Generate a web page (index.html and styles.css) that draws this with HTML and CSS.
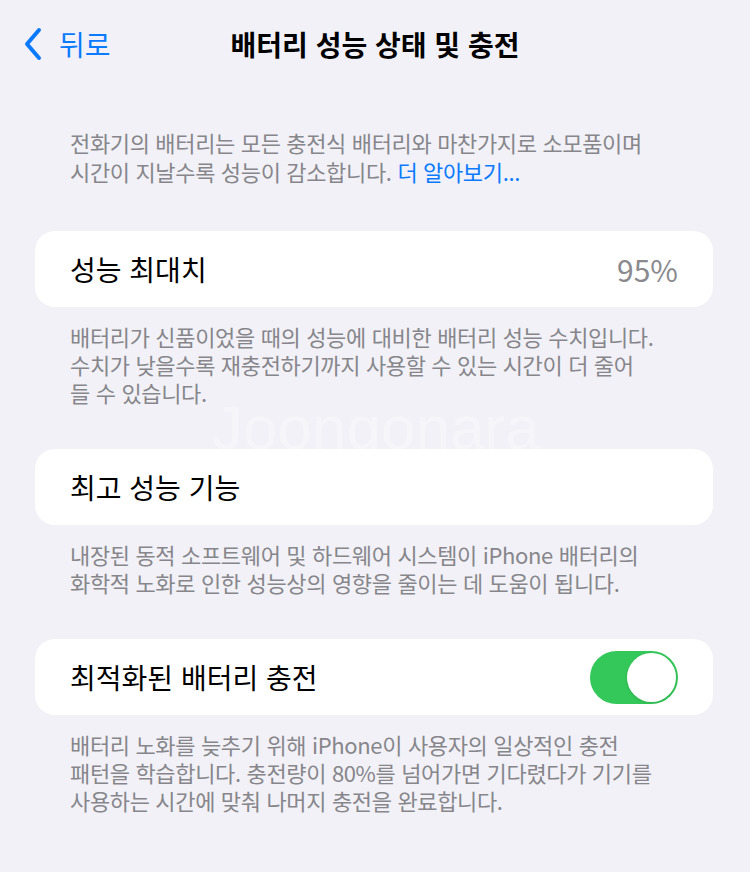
FILE: index.html
```html
<!DOCTYPE html>
<html lang="ko">
<head>
<meta charset="UTF-8">
<meta name="viewport" content="width=device-width, initial-scale=1.0">
<title>배터리 성능 상태 및 충전</title>
<link rel="stylesheet" href="styles.css">
</head>
<body>

<div class="nav">
  <a class="back" href="#">
    <svg class="chevron" width="20" height="34" viewBox="0 0 20 34">
      <path d="M16 3 L4 17 L16 31" fill="none" stroke="#0a7aff" stroke-width="4" stroke-linecap="round" stroke-linejoin="round"/>
    </svg>
    <span>뒤로</span>
  </a>
  <h1 class="title">배터리 성능 상태 및 충전</h1>
</div>

<p class="intro">전화기의 배터리는 모든 충전식 배터리와 마찬가지로 소모품이며<br>시간이 지날수록 성능이 감소합니다. <a href="#">더 알아보기...</a></p>

<div class="group">
  <div class="cell">
    <span class="label">성능 최대치</span>
    <span class="value">95%</span>
  </div>
  <p class="footer">배터리가 신품이었을 때의 성능에 대비한 배터리 성능 수치입니다.<br>수치가 낮을수록 재충전하기까지 사용할 수 있는 시간이 더 줄어<br>들 수 있습니다.</p>
</div>

<div class="group">
  <div class="cell">
    <span class="label">최고 성능 기능</span>
  </div>
  <p class="footer">내장된 동적 소프트웨어 및 하드웨어 시스템이 iPhone 배터리의<br>화학적 노화로 인한 성능상의 영향을 줄이는 데 도움이 됩니다.</p>
</div>

<div class="group">
  <div class="cell">
    <span class="label">최적화된 배터리 충전</span>
    <span class="toggle on"><span class="knob"></span></span>
  </div>
  <p class="footer">배터리 노화를 늦추기 위해 iPhone이 사용자의 일상적인 충전<br>패턴을 학습합니다. 충전량이 80%를 넘어가면 기다렸다가 기기를<br>사용하는 시간에 맞춰 나머지 충전을 완료합니다.</p>
</div>

<div class="watermark">Joongonara</div>

</body>
</html>
```

FILE: styles.css
```css
body { margin: 0; background-color: #f2f1f7; font-family: "Noto Sans CJK KR", "Noto Sans", sans-serif; color: #000; position: relative; min-height: 872px; }

/* top navigation bar */
.nav { position: relative; height: 88px; display: flex; align-items: center; justify-content: center; }
.back { position: absolute; left: 23px; top: 27px; display: flex; align-items: center; gap: 16px; color: #0a7aff; text-decoration: none; font-size: 28px; line-height: 34px; }
.chevron { display: block; }
.title { margin: 0; font-size: 28px; font-weight: 700; }

.intro { margin: 40px 30px 0 70px; font-size: 22px; line-height: 29px; color: #86868b; letter-spacing: -0.35px; }
.intro a { color: #0a7aff; text-decoration: none; }

/* grouped cells */
.group { margin-top: 45px; }
.group + .group { margin-top: 43px; }
.cell { margin: 0 37px 0 35px; height: 76px; padding: 0 35px 0 35px; background-color: #fff; border-radius: 20px; display: flex; align-items: center; justify-content: space-between; }
.label { font-size: 28px; }
.value { font-size: 30px; color: #8a8a8e; }
.footer { margin: 15px 30px 0 70px; font-size: 22px; line-height: 28px; color: #86868b; letter-spacing: -0.35px; }

/* switch */
.toggle { width: 88px; height: 53px; border-radius: 27px; background-color: #34c759; position: relative; }
.toggle .knob { position: absolute; right: 2px; top: 2px; width: 49px; height: 49px; border-radius: 50%; background-color: #fff; box-shadow: 0 1px 3px rgba(0, 0, 0, 0.12); }

/* faint mark over the page */
.watermark { position: absolute; left: 212px; top: 392px; font-family: "Liberation Sans", sans-serif; font-size: 62px; color: rgba(255, 255, 255, 0.35); pointer-events: none; }
```
